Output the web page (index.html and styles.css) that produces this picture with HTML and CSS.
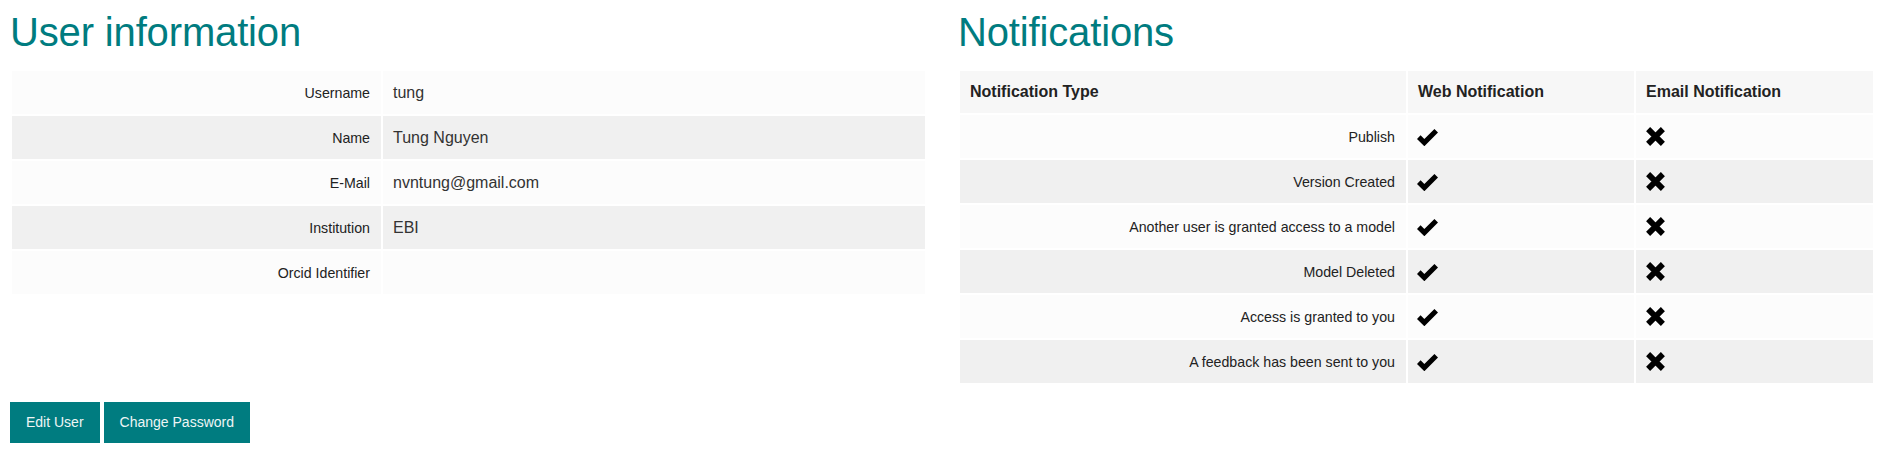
FILE: index.html
```html
<!DOCTYPE html>
<html>
<head>
<meta charset="utf-8">
<title>User profile</title>
<link rel="stylesheet" href="styles.css">
</head>
<body>
<div class="columns">
  <section class="panel panel-user">
    <h1 class="title">User information</h1>
    <table class="info-table">
      <colgroup><col class="c-label"><col class="c-value"></colgroup>
      <tbody>
        <tr class="odd"><td class="label">Username</td><td class="value">tung</td></tr>
        <tr class="even"><td class="label">Name</td><td class="value">Tung Nguyen</td></tr>
        <tr class="odd"><td class="label">E-Mail</td><td class="value">nvntung@gmail.com</td></tr>
        <tr class="even"><td class="label">Institution</td><td class="value">EBI</td></tr>
        <tr class="odd"><td class="label">Orcid Identifier</td><td class="value"></td></tr>
      </tbody>
    </table>
  </section>
  <section class="panel panel-notif">
    <h1 class="title">Notifications</h1>
    <table class="notif-table">
      <colgroup><col class="c-type"><col class="c-web"><col class="c-email"></colgroup>
      <thead>
        <tr><th>Notification Type</th><th>Web Notification</th><th>Email Notification</th></tr>
      </thead>
      <tbody>
        <tr class="odd"><td class="label">Publish</td><td class="icon"><svg class="ico" viewBox="0 0 20 18.5"><polygon points="0,11.3 3.4,7.9 7,11.5 16.6,1.9 20,5.3 7,18.3"/></svg></td><td class="icon"><svg class="ico ico-x" viewBox="0 0 18 18"><path d="M2 2L16 16M16 2L2 16"/></svg></td></tr>
        <tr class="even"><td class="label">Version Created</td><td class="icon"><svg class="ico" viewBox="0 0 20 18.5"><polygon points="0,11.3 3.4,7.9 7,11.5 16.6,1.9 20,5.3 7,18.3"/></svg></td><td class="icon"><svg class="ico ico-x" viewBox="0 0 18 18"><path d="M2 2L16 16M16 2L2 16"/></svg></td></tr>
        <tr class="odd"><td class="label">Another user is granted access to a model</td><td class="icon"><svg class="ico" viewBox="0 0 20 18.5"><polygon points="0,11.3 3.4,7.9 7,11.5 16.6,1.9 20,5.3 7,18.3"/></svg></td><td class="icon"><svg class="ico ico-x" viewBox="0 0 18 18"><path d="M2 2L16 16M16 2L2 16"/></svg></td></tr>
        <tr class="even"><td class="label">Model Deleted</td><td class="icon"><svg class="ico" viewBox="0 0 20 18.5"><polygon points="0,11.3 3.4,7.9 7,11.5 16.6,1.9 20,5.3 7,18.3"/></svg></td><td class="icon"><svg class="ico ico-x" viewBox="0 0 18 18"><path d="M2 2L16 16M16 2L2 16"/></svg></td></tr>
        <tr class="odd"><td class="label">Access is granted to you</td><td class="icon"><svg class="ico" viewBox="0 0 20 18.5"><polygon points="0,11.3 3.4,7.9 7,11.5 16.6,1.9 20,5.3 7,18.3"/></svg></td><td class="icon"><svg class="ico ico-x" viewBox="0 0 18 18"><path d="M2 2L16 16M16 2L2 16"/></svg></td></tr>
        <tr class="even"><td class="label">A feedback has been sent to you</td><td class="icon"><svg class="ico" viewBox="0 0 20 18.5"><polygon points="0,11.3 3.4,7.9 7,11.5 16.6,1.9 20,5.3 7,18.3"/></svg></td><td class="icon"><svg class="ico ico-x" viewBox="0 0 18 18"><path d="M2 2L16 16M16 2L2 16"/></svg></td></tr>
      </tbody>
    </table>
  </section>
</div>
<div class="actions">
  <a class="btn" href="#">Edit User</a>
  <a class="btn" href="#">Change Password</a>
</div>
</body>
</html>
```
FILE: styles.css
```css
html, body {
  margin: 0;
  background: #ffffff;
}
body {
  padding: 0 10px;
  font-family: "Liberation Sans", Arial, sans-serif;
  color: #222;
}
.columns {
  display: grid;
  grid-template-columns: 917px 917px;
  column-gap: 31px;
  align-items: start;
}
.title {
  margin: 10px 0 15px;
  font-size: 40px;
  line-height: 44px;
  font-weight: normal;
  color: #007c80;
  letter-spacing: -0.15px;
  white-space: nowrap;
}
table {
  border-collapse: separate;
  border-spacing: 2px;
  table-layout: fixed;
  width: 917px;
}
.c-label { width: 369px; }
.c-value { width: 542px; }
.c-type { width: 446px; }
.c-web { width: 226px; }
.c-email { width: 237px; }

td, th {
  padding: 0 10px;
  vertical-align: middle;
}
tbody tr { height: 43px; }
thead tr { height: 42px; }
tr.odd td { background: #fcfcfc; }
tr.even td { background: #f0f0f0; }
th {
  background: #f7f7f7;
  text-align: left;
  font-size: 16px;
  font-weight: bold;
  color: #222;
}
td.label {
  text-align: right;
  font-size: 14.2px;
  color: #222;
  padding-right: 11px;
}
td.value {
  font-size: 16px;
  color: #333;
}
td.icon {
  padding-left: 9px;
  line-height: 0;
}
.ico {
  width: 21px;
  height: 19.5px;
  fill: #000;
  display: inline-block;
}
.ico-x {
  width: 21px;
  height: 19px;
  fill: none;
  stroke: #000;
  stroke-width: 5.4;
}
.actions {
  margin-top: 17px;
  display: flex;
  gap: 4px;
}
.btn {
  display: block;
  padding: 10px 16px;
  line-height: 21px;
  font-size: 14px;
  background: #007c80;
  color: #eef5f5;
  text-decoration: none;
}
```
